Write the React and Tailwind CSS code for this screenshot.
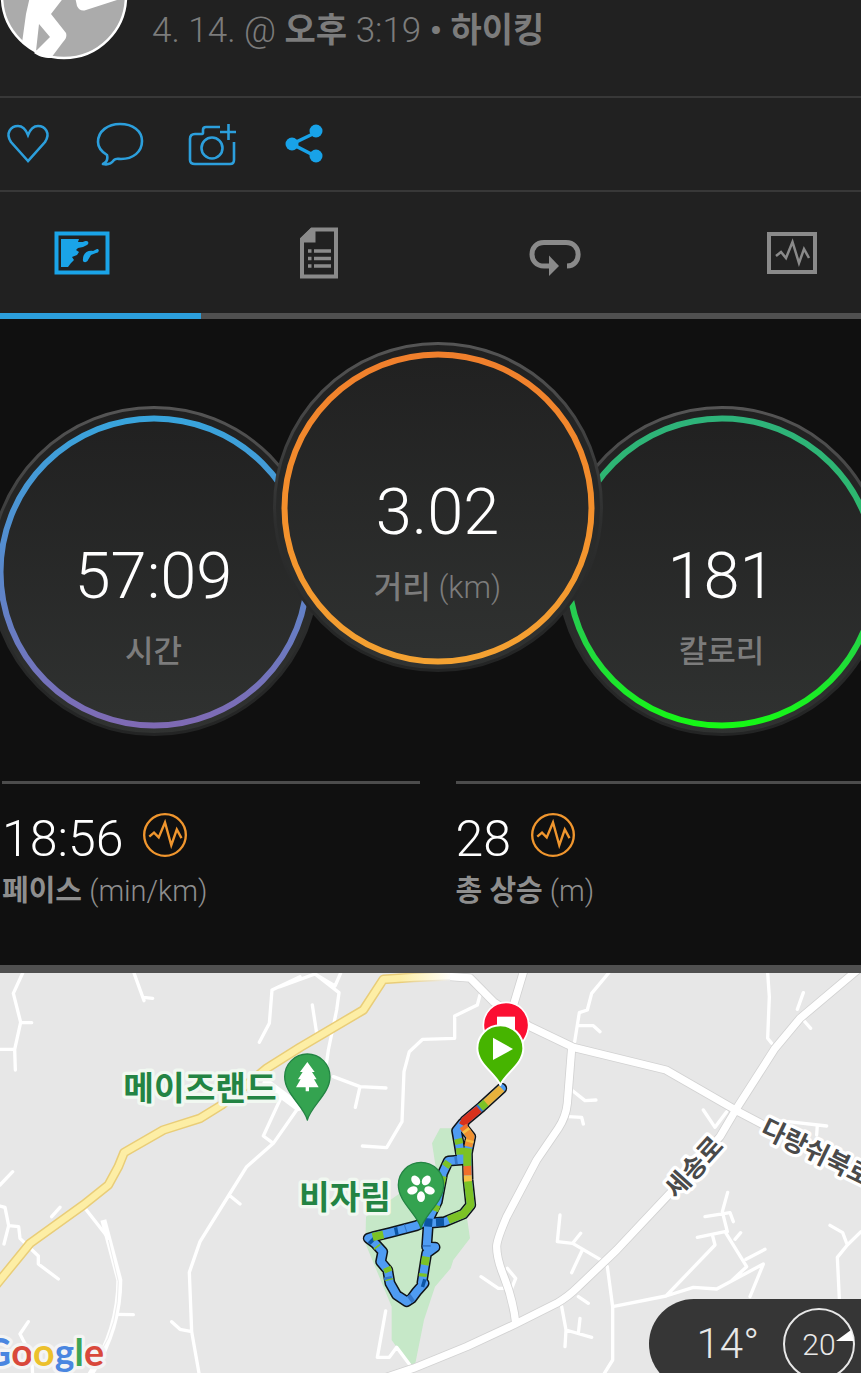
import { useState } from 'react'

const PULSE = 'M8 26 L14 21 L20 27 L28 8 L36 37 L43 17 L49 28'

const gauges = [
  { id: 'time', value: '57:09', label: '시간', from: '#38a4dc', mid: '#5a88cc', to: '#7f6ab4', className: 'mt-16' },
  { id: 'distance', value: '3.02', label: '거리', unit: '(km)', from: '#f07f2c', mid: '#f38f2c', to: '#f4a232', className: 'z-10 -mx-[46px]' },
  { id: 'calories', value: '181', label: '칼로리', from: '#2eb37a', mid: '#2cbb66', to: '#16f816', className: 'mt-16' },
]

const stats = [
  { id: 'pace', value: '18:56', label: '페이스', unit: '(min/km)' },
  { id: 'ascent', value: '28', label: '총 상승', unit: '(m)' },
]

// Map geometry, in map units (3 per pixel)
const minorRoads = [
  // west
  'M68 39 L40 100 L62 187 L95 188 M62 187 L44 268 L46 330 M0 268 L44 268',
  'M402 39 L432 122 M430 112 L458 115',
  'M900 50 L816 90 L808 190 L778 247',
  'M0 675 L38 635 M0 738 L15 742 L26 797 L12 852 M26 797 L56 800 L60 835 L115 888 L115 912 L175 957',
  'M155 770 L180 742 M255 745 L318 825',
  'M890 450 L820 550 L740 620 L687 705 L600 845 L568 937 L575 1115 L598 1245',
  'M842 415 L790 528 L820 550 M687 705 L720 732 M515 1085 L540 1108 L575 1115',
  'M345 1063 L400 1064 M85 1085 L60 1122 L95 1190 L98 1245',
  // centre
  'M840 80 L945 42 L1017 98 L1010 150 L985 270 L978 320 M945 42 L1005 78 L1022 39 M937 135 L950 220',
  'M1000 350 L1080 380 L1158 384 M1080 380 L1066 442',
  'M1440 105 L1432 135 L1364 168 L1364 235 L1268 238 L1228 275 L1212 335 L1206 485 L1160 563 L1087 558',
  'M1157 1053 L1132 1192 L1168 1192 L1190 1162 L1232 1218',
  'M1443 950 L1495 985 L1535 985 L1547 955 L1522 925',
  // east
  'M1826 39 L1775 100 L1762 150 L1738 158 L1724 245 M1738 197 L1780 197 L1800 215',
  'M1715 390 L1755 422 L1788 420 M1705 470 L1745 472 L1750 492',
  'M2303 39 L2308 110 L2303 235 L2315 250 M2410 98 L2392 148 M2410 180 L2432 205',
  'M2180 455 L2145 502 L2110 450 M2365 485 L2480 498 M2452 495 L2450 525',
  'M1680 765 L1672 845 L1718 850 L1800 898 M1718 850 L1742 820 M1748 868 L1715 938',
  'M1822 920 L1838 1040 L1838 1200 L1810 1245 M1838 1040 L1998 1008 L2080 982 L2150 987 L2290 912 L2250 1010',
  'M1998 1008 L2145 855 L2138 828 M2092 832 L2175 815 L2240 920 L2195 962 M2183 697 L2167 755 L2182 815 M2115 770 L2190 758 L2200 785 M2238 898 L2295 868 M2205 838 L2222 818',
  'M2490 796 L2528 818 L2542 855 L2583 815 M2542 855 L2512 892 L2518 1015',
  'M1685 1040 L1698 1110 L1695 1160 M1698 1110 L1775 1132 M1740 1075 L1735 1120 M1735 1010 L1765 1030',
]

const mainRoads = [
  'M1575 20 L1542 130',
  'M1300 46 L1410 54 L1480 125 L1590 200 L1720 262 L1998 330 L2210 452 L2583 650',
  'M1715 265 L1702 430 Q1698 470 1675 505 L1610 600 L1520 770 Q1490 840 1490 860 Q1490 895 1510 945 Q1540 1020 1548 1095',
  'M2590 15 L2400 175 L2325 265 L2210 445 L2160 530 L2010 700 L1850 870 L1735 980 Q1705 1010 1670 1030 L1540 1095 L1400 1160 L1240 1225 L1120 1265',
]

const HIGHWAY =
  'M-20 985 L90 850 L250 735 L325 675 L355 620 L372 578 L490 510 L600 475 L665 435 L745 370 L800 325 L900 262 L1090 150 L1150 58 L1240 52 L1350 48'

const TRACK =
  'M1505 385 L1445 440 L1395 482 L1388 500 L1412 530 L1402 580 L1404 660 L1412 735 L1390 762 L1335 785 L1285 790 L1280 860 L1305 862 L1280 880 L1275 910 L1266 968 L1272 970 L1250 995 L1235 1015 L1220 1025 L1190 1005 L1170 970 L1163 930 L1142 905 L1148 875 L1125 850 L1105 835 L1120 830 L1170 818 L1250 797 L1285 780 L1312 725 L1328 640 L1345 603 L1385 600 L1375 540 L1370 512 L1388 490'

const trackParts = [
  ['#e8b23c', 'M1505 385 L1456 430'],
  ['#7cc226', 'M1458 428 L1441 443'],
  ['#3577c8', 'M1441 443 L1436 447'],
  ['#d8301c', 'M1437 447 L1395 482 L1388 496'],
  ['#f0702a', 'M1389 498 L1397 510'],
  ['#f6c044', 'M1396 508 L1402 516'],
  ['#f09030', 'M1401 515 L1412 530 L1405 560'],
  ['#f6c044', 'M1410 540 L1408 547'],
  ['#7cc226', 'M1404 565 L1402 582 L1402 618'],
  ['#f0702a', 'M1402 618 L1403 646'],
  ['#f6c044', 'M1403 646 L1404 668'],
  ['#7cc226', 'M1404 664 L1412 735 L1390 762 L1345 780'],
  ['#0c55a4', 'M1332 786 L1308 787 M1286 775 L1284 800'],
  ['#7cc226', 'M1278 890 L1274 915 M1269 940 L1268 950'],
  ['#0c55a4', 'M1266 968 L1276 971 M1194 813 L1184 815 M1112 838 L1120 846'],
  ['#3577c8', 'M1238 1012 L1228 1019 M1280 855 L1280 860 M1163 950 L1165 960'],
  ['#7cc226', 'M1160 922 L1166 936 M1150 824 L1118 831 M1130 858 L1133 862 M1167 957 L1168 961'],
  ['#7cc226', 'M1310 735 L1303 752 M1320 680 L1328 648 M1336 620 L1346 606 M1374 536 L1378 552 M1380 564 L1381 584'],
  ['#3577c8', 'M1364 601 L1372 600 M1215 805 L1218 804'],
]

const PIN = 'M0 130 C-10 88 -68 52 -68 0 A68 68 0 1 1 68 0 C68 52 10 88 0 130 Z'

const HeartIcon = () => (
  <svg viewBox="0 0 48 44" className="h-11 w-12" fill="none" stroke="#2c9fdc" strokeWidth="2.6">
    <path d="M24 39 L7 20 C1 11 7 4 14 4 C19 4 22 8 24 13 C26 8 29 4 34 4 C41 4 47 11 41 20 Z" />
  </svg>
)

const CommentIcon = () => (
  <svg viewBox="0 0 48 44" className="h-11 w-12" fill="none" stroke="#2c9fdc" strokeWidth="2.6" strokeLinejoin="round">
    <path d="M11 33 C6 30 2 26 2 20 C2 9 12 2 24 2 C37 2 46 9 46 19 C46 30 37 37 25 37 C22 37 20 36 18 38 C15 42 11 43 7 42 C11 40 12 37 11 33 Z" />
  </svg>
)

const CameraPlusIcon = () => (
  <svg viewBox="0 0 48 44" className="h-11 w-12" fill="none" stroke="#2c9fdc" strokeWidth="2.6">
    <path d="M32 5 H18 Q15 5 15 8 V11 Q15 12 13 12 H7 Q2 12 2 17 V38 Q2 42 7 42 H42 Q46 42 46 38 V20" />
    <circle cx="24" cy="26" r="10.5" />
    <path d="M40.500 2 V18 M32 10 H48" />
  </svg>
)

const ShareIcon = () => (
  <svg viewBox="0 0 48 44" className="h-11 w-12" fill="#18a2e8" stroke="#18a2e8">
    <path d="M37 10 L12 22 L37 35" fill="none" strokeWidth="3.5" />
    <circle cx="36" cy="9" r="6.5" stroke="none" />
    <circle cx="12" cy="22" r="6.5" stroke="none" />
    <circle cx="36" cy="34" r="6.5" stroke="none" />
  </svg>
)

const MapIcon = () => (
  <svg viewBox="0 0 56 44" className="h-11 w-14" fill="currentColor">
    <path d="M2.5 2.5 H53.5 V41.5 H2.5 Z" fill="none" stroke="currentColor" strokeWidth="4" />
    <path d="M7 8 H25 L24 11 H29 C34 8 36 12 33 14 L29 16 L24 17 L22 19 L25 21 L23 24 L18 26 L20 29 L17 32 L14 36 H7 Z" />
    <path d="M29 28 C29 22 34 19 39 20 L43 18 C46 18 45 22 42 22 L37 24 L34 29 C33 32 28 32 29 28 Z" />
  </svg>
)

const DetailsIcon = () => (
  <svg viewBox="0 0 38 52" className="h-[52px] w-[38px]" fill="none" stroke="currentColor">
    <path d="M12 2.5 H36 V49.5 H2 V12 Z" strokeWidth="4" />
    <path d="M11 1 H15.5 V15.5 H1 V11 Z" fill="currentColor" stroke="none" />
    <path d="M14 24 H31 M14 31.5 H31 M14 39 H31 M8 24 H11.5 M8 31.5 H11.5 M8 39 H11.5" strokeWidth="3.3" />
  </svg>
)

const LapsIcon = () => (
  <svg viewBox="0 0 52 38" className="mt-2 h-[38px] w-[52px]" fill="none" stroke="currentColor">
    <path d="M20 28 H15 C-1 28 -1 4.5 15 4.5 H37 C53 4.5 53 28 38 28" strokeWidth="5" />
    <path d="M20 17.5 L30 28 L20 38 Z" fill="currentColor" stroke="none" />
  </svg>
)

const ChartIcon = () => (
  <svg viewBox="0 0 50 42" className="h-[42px] w-[50px]" fill="none" stroke="currentColor">
    <rect x="2" y="2" width="46" height="38" strokeWidth="4" />
    <path d="M9 24 L14 20 L19 26 L25.5 10 L32 31 L37 17 L42 26" strokeWidth="2.5" />
  </svg>
)

const actions = [
  { name: '좋아요', Icon: HeartIcon },
  { name: '댓글', Icon: CommentIcon },
  { name: '사진 추가', Icon: CameraPlusIcon },
  { name: '공유', Icon: ShareIcon },
]

const tabs = [
  { name: '지도', Icon: MapIcon },
  { name: '세부 정보', Icon: DetailsIcon },
  { name: '랩', Icon: LapsIcon },
  { name: '차트', Icon: ChartIcon },
]

const Avatar = () => (
  <svg viewBox="0 0 128 128" className="-mt-[68px] h-32 w-32 shrink-0">
    <circle cx="64" cy="64" r="62" fill="#ababab" stroke="#fff" strokeWidth="2.5" />
    <path d="M31 60 L68 60 L51 82 L66 101 C67 104 66 107 63 110 L51 126 C44 126 38 124 34 121 L50 105 L39 92 L36 119 L22 111 L26 82 Z" fill="#fff" />
    <path d="M74 60 L77 74 Q80 80 86 78 L117 68 L116 60 Z" fill="#fff" />
  </svg>
)

const Gauge = ({ id, value, label, unit, from, mid, to, className }) => (
  <div className={`relative h-[330px] w-[330px] shrink-0 ${className}`}>
    <svg viewBox="0 0 330 330" className="absolute inset-0 h-full w-full" aria-hidden="true">
      <defs>
        <linearGradient id={`${id}-ring`} x1="0" y1="0" x2="0" y2="1">
          <stop offset="0" stopColor={from} />
          <stop offset=".5" stopColor={mid} />
          <stop offset="1" stopColor={to} />
        </linearGradient>
        <linearGradient id={`${id}-face`} x1="0" y1="0" x2="0" y2="1">
          <stop offset="0" stopColor="#202020" />
          <stop offset="1" stopColor="#303231" />
        </linearGradient>
        <linearGradient id={`${id}-rim`} x1="0" y1="0" x2="0" y2="1">
          <stop offset="0" stopColor="#555" />
          <stop offset=".55" stopColor="#2d2e2e" />
          <stop offset="1" stopColor="#232424" />
        </linearGradient>
      </defs>
      <circle cx="165" cy="165" r="163.5" fill={`url(#${id}-face)`} stroke={`url(#${id}-rim)`} strokeWidth="3" />
      <circle cx="165" cy="166" r="153.5" fill="none" stroke={`url(#${id}-ring)`} strokeWidth="6" />
    </svg>
    <div className="relative pt-[136px] text-center">
      <p className="text-[65px] leading-[68px] font-light text-white">{value}</p>
      <p className="mt-[22px] text-[31px] leading-10 font-light text-[#7c7c7c]">
        <span className="font-medium">{label}</span>
        {unit && ` ${unit}`}
      </p>
    </div>
  </div>
)

const Stat = ({ value, label, unit }) => (
  <div className="border-t-3 border-[#4c4c4c] pt-[29px]">
    <div className="flex items-start gap-5">
      <span className="text-[50px] leading-[52px] font-light text-white">{value}</span>
      <svg viewBox="0 0 56 56" className="h-11 w-11" fill="none" stroke="#f0962e" aria-hidden="true">
        <circle cx="28" cy="28" r="26.5" strokeWidth="3" />
        <path d={PULSE} transform="translate(0 4)" strokeWidth="3" />
      </svg>
    </div>
    <p className="mt-1.5 text-[29px] leading-10 font-light text-[#8e8e8e]">
      <span className="font-bold">{label}</span> {unit}
    </p>
  </div>
)

const RouteMap = () => (
  <svg viewBox="0 39 2583 1200" preserveAspectRatio="xMidYMid slice" className="absolute inset-0 h-full w-full" fill="none" strokeLinejoin="round">
    <defs>
      <linearGradient id="highway-end" gradientUnits="userSpaceOnUse" x1="1200" y1="0" x2="1360" y2="0">
        <stop offset="0" stopColor="#fdeea5" />
        <stop offset="1" stopColor="#fff" />
      </linearGradient>
      <linearGradient id="highway-edge" gradientUnits="userSpaceOnUse" x1="1200" y1="0" x2="1350" y2="0">
        <stop offset="0" stopColor="#e9cd78" />
        <stop offset="1" stopColor="#eee" />
      </linearGradient>
    </defs>
    <rect x="0" y="39" width="2583" height="1200" fill="#e7e7e7" />
    <path d="M1320 505 H1360 L1382 570 L1402 780 L1410 835 L1360 900 L1352 925 L1305 980 L1272 1080 L1245 1215 H1228 L1175 1140 V1040 L1096 850 L1098 770 L1200 700 L1310 640 L1296 550 Z" fill="#c6e8c8" />

    <path d={minorRoads.join(' ')} stroke="#fff" strokeWidth="10" strokeLinecap="round" />
    <path d="M310 780 L358 960 Q358 1110 270 1245" stroke="#fff" strokeWidth="18" />
    <path d="M325 840 L355 965 Q355 1095 300 1180" stroke="#ececec" strokeWidth="3" />
    <path d="M800 370 L895 440" stroke="#fff" strokeWidth="26" strokeLinecap="round" />
    <path d={mainRoads.join(' ')} stroke="#d2d2d2" strokeWidth="27" />
    <path d={mainRoads.join(' ')} stroke="#fff" strokeWidth="22" />
    <path d={HIGHWAY} stroke="url(#highway-edge)" strokeWidth="29" />
    <path d={HIGHWAY} stroke="url(#highway-end)" strokeWidth="20" />

    <g strokeLinecap="round">
      <path d={TRACK} stroke="#101418" strokeWidth="33" />
      <path d={TRACK} stroke="#4f9cf2" strokeWidth="24" />
    </g>
    {trackParts.map(([color, d]) => (
      <path key={d} d={d} stroke={color} strokeWidth="24" />
    ))}

    <g transform="translate(922 350)">
      <path d={PIN} fill="#34a350" stroke="#238443" strokeWidth="4" />
      <path d="M0 -44 L22 -14 L14 -14 L28 8 L20 8 L34 32 H5 V44 H-5 V32 H-34 L-20 8 L-28 8 L-14 -14 L-22 -14 Z" fill="#fff" />
    </g>
    <g transform="translate(1263 675)">
      <path d={PIN} fill="#34a350" stroke="#238443" strokeWidth="4" />
      {[36, 108, 180, 252, 324].map((angle) => (
        <ellipse key={angle} cx="0" cy="-27" rx="12" ry="16" transform={`translate(0 8) rotate(${angle})`} fill="#fff" />
      ))}
    </g>
    <g transform="translate(1518 195)">
      <path d={PIN} fill="#fb0f32" stroke="#fff" strokeWidth="5" />
      <rect x="-27" y="-25" width="54" height="54" fill="#fff" />
    </g>
    <g transform="translate(1501 265)">
      <path d="M0 110 C-14 75 -69 48 -69 0 A69 69 0 1 1 69 0 C69 48 14 75 0 110 Z" fill="#46b400" stroke="#fff" strokeWidth="6" />
      <path d="M-22 -32 L38 2 L-22 35 Z" fill="#fff" />
    </g>

    <g className="font-bold [paint-order:stroke]" stroke="#fff" strokeWidth="20">
      <g fill="#238443" stroke="#f1f8f1" fontSize="100">
        <text x="370" y="420">메이즈랜드</text>
        <text x="897" y="748">비자림</text>
      </g>
      <g fill="#4a4a4a" fontSize="78" textAnchor="middle" className="font-bold">
        <text transform="translate(2082 622) rotate(-48)" y="27">세송로</text>
        <text transform="translate(2450 578) rotate(26)" y="27">다랑쉬북로</text>
      </g>
      <text x="-48" y="1219" fontSize="113" stroke="#f4f4f4" className="font-['Lato'] font-bold">
        <tspan fill="#4a86e0">G</tspan>
        <tspan fill="#d9483b">o</tspan>
        <tspan fill="#ecc02c">o</tspan>
        <tspan fill="#4a86e0">g</tspan>
        <tspan fill="#3da556">l</tspan>
        <tspan fill="#d9483b">e</tspan>
      </text>
    </g>
  </svg>
)

const App = () => {
  const [activeTab, setActiveTab] = useState(0)

  return (
    <div className="flex min-h-screen flex-col overflow-hidden bg-[#101010] font-['Roboto','Noto_Sans_CJK_KR',sans-serif]">
      <header className="flex items-start gap-6 border-b-2 border-[#383838] bg-[#212121] pb-9">
        <Avatar />
        <p className="pt-2 text-[35px] leading-11 font-light whitespace-nowrap text-[#7c7c7c]">
          4. 14. @ <span className="text-[34px] font-bold">오후</span> 3:19{' '}
          <span className="text-[34px] font-bold">• 하이킹</span>
        </p>
      </header>

      <div className="flex gap-11 border-b-2 border-[#383838] bg-[#212121] px-1 py-6">
        {actions.map(({ name, Icon }) => (
          <button key={name} type="button" aria-label={name}>
            <Icon />
          </button>
        ))}
      </div>

      {/* Tab strip, wider than the screen */}
      <div role="tablist" className="-mr-[49px] -ml-9 grid grid-cols-4 bg-[#212121]">
        {tabs.map(({ name, Icon }, i) => (
          <button
            key={name}
            type="button"
            role="tab"
            aria-label={name}
            aria-selected={activeTab === i}
            onClick={() => setActiveTab(i)}
            className={`flex h-[127px] items-center justify-center border-b-6 ${
              activeTab === i ? 'border-[#2c9fdc] text-[#1aa4e8]' : 'border-[#505050] text-[#8a8a8a]'
            }`}
          >
            <Icon />
          </button>
        ))}
      </div>

      <section className="flex justify-center pt-[23px] pb-[45px] pl-[14px]">
        {gauges.map((gauge) => (
          <Gauge key={gauge.id} {...gauge} />
        ))}
      </section>

      <section className="-mr-3 grid grid-cols-2 gap-9 pb-[54px] pl-[2px]">
        {stats.map((stat) => (
          <Stat key={stat.id} {...stat} />
        ))}
      </section>

      <section className="relative min-h-[408px] flex-1 overflow-hidden border-t-8 border-[#505050]">
        <RouteMap />
        <div className="absolute right-0 -bottom-4 flex h-[90px] items-center gap-6 rounded-l-full bg-[#363636] pr-[6px] pl-12 text-[#e8e8e8]">
          <span className="text-[42px] leading-[48px] font-light">14°</span>
          <span className="relative flex h-[72px] w-[72px] items-center justify-center rounded-full border-2 border-[#e8e8e8] text-[30px] font-light">
            20
            <svg viewBox="0 0 18 12" className="absolute top-5 -right-px h-3 w-[18px]" aria-hidden="true">
              <path d="M0 11 L15 0 L18 11 Z" fill="#fff" />
            </svg>
          </span>
        </div>
      </section>
    </div>
  )
}

export default App
